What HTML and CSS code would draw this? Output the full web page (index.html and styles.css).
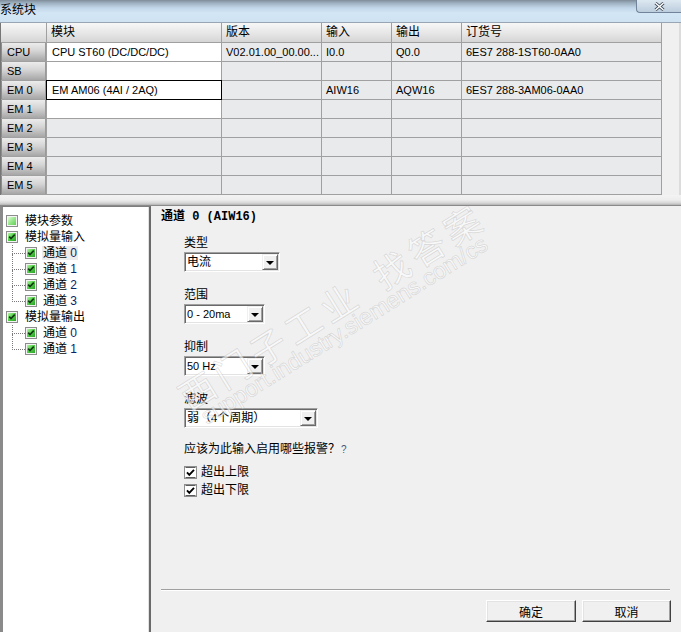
FILE: index.html
```html
<!DOCTYPE html>
<html lang="zh-CN">
<head>
<meta charset="utf-8">
<title>系统块</title>
<link rel="stylesheet" href="styles.css">
</head>
<body>
<div class="window">
  <div class="titlebar">
    <span class="title">系统块</span>
    <div class="close">
      <svg width="11" height="9" viewBox="0 0 11 9"><path d="M1.5 1 L9.5 8 M9.5 1 L1.5 8" stroke="#3b4856" stroke-width="3" fill="none"/><path d="M1.5 1 L9.5 8 M9.5 1 L1.5 8" stroke="#ffffff" stroke-width="1.5" fill="none"/></svg>
    </div>
  </div>

  <div class="top">
    <div class="grid">
      <div class="hdr"></div><div class="hdr">模块</div><div class="hdr">版本</div><div class="hdr">输入</div><div class="hdr">输出</div><div class="hdr">订货号</div>

      <div class="rh">CPU</div><div class="cell white">CPU ST60 (DC/DC/DC)</div><div class="cell">V02.01.00_00.00...</div><div class="cell">I0.0</div><div class="cell">Q0.0</div><div class="cell">6ES7 288-1ST60-0AA0</div>

      <div class="rh">SB</div><div class="cell white"></div><div class="cell"></div><div class="cell"></div><div class="cell"></div><div class="cell"></div>

      <div class="rh">EM 0</div><div class="cell white sel">EM AM06 (4AI / 2AQ)</div><div class="cell"></div><div class="cell">AIW16</div><div class="cell">AQW16</div><div class="cell">6ES7 288-3AM06-0AA0</div>

      <div class="rh">EM 1</div><div class="cell white"></div><div class="cell"></div><div class="cell"></div><div class="cell"></div><div class="cell"></div>

      <div class="rh">EM 2</div><div class="cell"></div><div class="cell"></div><div class="cell"></div><div class="cell"></div><div class="cell"></div>

      <div class="rh">EM 3</div><div class="cell"></div><div class="cell"></div><div class="cell"></div><div class="cell"></div><div class="cell"></div>

      <div class="rh">EM 4</div><div class="cell"></div><div class="cell"></div><div class="cell"></div><div class="cell"></div><div class="cell"></div>

      <div class="rh">EM 5</div><div class="cell"></div><div class="cell"></div><div class="cell"></div><div class="cell"></div><div class="cell"></div>
    </div>
    <div class="grid-side"></div>
  </div>

  <div class="splitter"></div>

  <div class="bottom">
    <div class="tree">
      <div class="tnode"><svg class="tcb"><use href="#tcb0"/></svg><span class="tl">模块参数</span></div>
      <div class="tnode"><svg class="tcb"><use href="#tcb"/></svg><span class="tl">模拟量输入</span></div>
      <div class="tnode child"><span class="conn"></span><svg class="tcb"><use href="#tcb"/></svg><span class="tl focus">通道 <span class="num">0</span></span></div>
      <div class="tnode child"><span class="conn"></span><svg class="tcb"><use href="#tcb"/></svg><span class="tl">通道 <span class="num">1</span></span></div>
      <div class="tnode child"><span class="conn"></span><svg class="tcb"><use href="#tcb"/></svg><span class="tl">通道 <span class="num">2</span></span></div>
      <div class="tnode child last"><span class="conn"></span><svg class="tcb"><use href="#tcb"/></svg><span class="tl">通道 <span class="num">3</span></span></div>
      <div class="tnode"><svg class="tcb"><use href="#tcb"/></svg><span class="tl">模拟量输出</span></div>
      <div class="tnode child"><span class="conn"></span><svg class="tcb"><use href="#tcb"/></svg><span class="tl">通道 <span class="num">0</span></span></div>
      <div class="tnode child last"><span class="conn"></span><svg class="tcb"><use href="#tcb"/></svg><span class="tl">通道 <span class="num">1</span></span></div>
    </div>

    <div class="props">
      <div class="ptitle">通道 0 (AIW16)</div>
      <div class="form">
        <div class="field first">
          <div class="flabel">类型</div>
          <div class="select w96"><span class="sval">电流</span><span class="sbtn"><span class="tri"></span></span></div>
        </div>
        <div class="field">
          <div class="flabel">范围</div>
          <div class="select w81"><span class="sval lat">0 - 20ma</span><span class="sbtn"><span class="tri"></span></span></div>
        </div>
        <div class="field">
          <div class="flabel">抑制</div>
          <div class="select w81"><span class="sval lat">50 Hz</span><span class="sbtn"><span class="tri"></span></span></div>
        </div>
        <div class="field">
          <div class="flabel">滤波</div>
          <div class="select w134"><span class="sval">弱（<span class="lat">4</span>个周期）</span><span class="sbtn"><span class="tri"></span></span></div>
        </div>
        <div class="q">应该为此输入启用哪些报警？<span class="qm">?</span></div>
        <div class="chk first">
          <svg class="cb" viewBox="0 0 13 13"><rect x="0.5" y="0.5" width="12" height="12" fill="#fff" stroke="#8e8e8e"/><rect x="1.5" y="1.5" width="10" height="10" fill="none" stroke="#5c5c5c" stroke-dasharray="10 10"/><path d="M3 6.3 L5.3 8.8 L10 3.8" fill="none" stroke="#000" stroke-width="1.9"/></svg>
          <span class="ctext">超出上限</span>
        </div>
        <div class="chk">
          <svg class="cb" viewBox="0 0 13 13"><rect x="0.5" y="0.5" width="12" height="12" fill="#fff" stroke="#8e8e8e"/><rect x="1.5" y="1.5" width="10" height="10" fill="none" stroke="#5c5c5c" stroke-dasharray="10 10"/><path d="M3 6.3 L5.3 8.8 L10 3.8" fill="none" stroke="#000" stroke-width="1.9"/></svg>
          <span class="ctext">超出下限</span>
        </div>
      </div>
      <div class="spacer"></div>
      <div class="hr"></div>
      <div class="btns">
        <button class="btn ok" type="button">确定</button>
        <button class="btn" type="button">取消</button>
      </div>
    </div>
  </div>

  <div class="wm wm-cn"><span>西门子工业</span><span>找答案</span></div>
  <div class="wm wm-url">support.industry.siemens.com/cs</div>
</div>

<svg class="defs" width="0" height="0" aria-hidden="true">
  <defs>
    <linearGradient id="gGreen" x1="0" y1="0" x2="1" y2="1">
      <stop offset="0" stop-color="#b9f2a9"/>
      <stop offset="0.45" stop-color="#55d24a"/>
      <stop offset="1" stop-color="#2ba327"/>
    </linearGradient>
    <linearGradient id="gLight" x1="0" y1="0" x2="1" y2="1">
      <stop offset="0" stop-color="#e2fbd8"/>
      <stop offset="0.5" stop-color="#98e58c"/>
      <stop offset="1" stop-color="#5fcf55"/>
    </linearGradient>
    <symbol id="tcb" viewBox="0 0 12 12">
      <rect x="0.5" y="0.5" width="11" height="11" fill="#f4f4f4" stroke="#8c8c8c"/>
      <rect x="2" y="2" width="8" height="8" fill="url(#gGreen)"/>
      <path d="M3.2 5.7 L5 7.6 L8.8 3.7" fill="none" stroke="#153a15" stroke-width="1.7"/>
    </symbol>
    <symbol id="tcb0" viewBox="0 0 12 12">
      <rect x="0.5" y="0.5" width="11" height="11" fill="#f4f4f4" stroke="#8c8c8c"/>
      <rect x="2" y="2" width="8" height="8" fill="url(#gLight)"/>
    </symbol>
  </defs>
</svg>
</body>
</html>
```
FILE: styles.css
```css
* { box-sizing: border-box; }
html, body { margin: 0; padding: 0; }
body {
  width: 681px;
  height: 632px;
  overflow: hidden;
  background: #f0f0f0;
  font-family: "Liberation Sans", "Noto Sans CJK SC", sans-serif;
  font-size: 12px;
  color: #000;
}
.window {
  position: relative;
  width: 681px;
  height: 632px;
  display: flex;
  flex-direction: column;
  overflow: hidden;
}

/* title bar */
.titlebar {
  flex: none;
  height: 23px;
  display: flex;
  justify-content: space-between;
  align-items: flex-start;
  background: linear-gradient(180deg, #7e8c98 0px, #9db0c0 3px, #c2d7e9 8px, #d3e6f5 13px, #cee2f2 22px);
  border-bottom: 1px solid #98a6b3;
}
.title {
  font-family: "Noto Sans CJK SC", sans-serif;
  font-size: 12px;
  line-height: 16px;
  margin-top: 1px;
}
.close {
  width: 45px;
  height: 13px;
  display: flex;
  align-items: center;
  justify-content: center;
  border: 1px solid #71849a;
  border-top: 0;
  border-right: 0;
  border-radius: 0 0 0 4px;
  background: linear-gradient(#dde8f1, #bccddd);
}

/* module grid */
.top { flex: none; display: flex; height: 172px; }
.grid {
  width: 662px;
  flex: none;
  display: grid;
  grid-template-columns: 45px 174px 99px 69px 69px 199px;
  grid-template-rows: 19px repeat(8, 18px);
  gap: 1px;
  background: #a0a0a0;
  border-left: 1px solid #767676;
  padding: 0 1px 1px 0;
}
.hdr {
  background: linear-gradient(#f7f7f7, #e6e6e6 55%, #d5d5d5);
  font-size: 12px;
  line-height: 19px;
  padding-left: 4px;
  white-space: nowrap;
}
.rh {
  background: linear-gradient(#ececec, #d4d4d4 45%, #a6a6a6);
  box-shadow: inset 1px 0 #8c8c8c, inset -1px 0 #9a9a9a;
  font-size: 11px;
  line-height: 18px;
  padding-left: 6px;
  white-space: nowrap;
}
.cell {
  background: #e9eaec;
  font-size: 11px;
  line-height: 18px;
  padding-left: 4px;
  white-space: nowrap;
  overflow: hidden;
}
.cell.white { background: #ffffff; padding-left: 5px; }
.cell.sel { outline: 1px solid #000; }
.grid-side { flex: 1; background: #f0f0f0; box-shadow: inset -2px 0 #dcdcdc; }

.splitter {
  flex: none;
  height: 11px;
  background: linear-gradient(#f3f3f3 0px, #ededed 5px, #d6d6d6 8px, #b2b2b2 10px, #8a8a8a 10px, #8a8a8a 11px);
}

/* lower area */
.bottom { flex: 1; display: flex; min-height: 0; }

.tree {
  width: 151px;
  flex: none;
  background: #ffffff;
  border-top: 1px solid #7e7e7e;
  border-left: 3px solid #8a8a8a;
  border-right: 2px solid #6a6a6a;
  box-shadow: inset -1px 0 #e2e2e2;
  padding-top: 6px;
}
.tnode {
  height: 16px;
  display: flex;
  align-items: center;
  padding-left: 3px;
  white-space: nowrap;
}
.tcb { width: 12px; height: 12px; flex: none; }
.tl {
  margin-left: 6px;
  padding: 0 1px;
  font-size: 12px;
  line-height: 14px;
}
.tl.focus { background: #ececec; }
.num { font-family: "Liberation Sans", sans-serif; color: #0c2266; }
.tnode.child { padding-left: 9px; }
.tnode.child .tl { margin-left: 5px; }
.conn { width: 13px; height: 16px; flex: none; }
.conn::before {
  content: "";
  display: block;
  height: 8px;
  border-left: 1px dotted #7a7a7a;
  border-bottom: 1px dotted #7a7a7a;
}
.conn::after {
  content: "";
  display: block;
  height: 8px;
  border-left: 1px dotted #7a7a7a;
}
.tnode.last .conn::after { border-left: 0; }

.props {
  flex: 1;
  display: flex;
  flex-direction: column;
  padding: 3px 10px 10px 10px;
}
.ptitle {
  font-family: "Liberation Mono", "Noto Sans CJK SC", monospace;
  font-weight: bold;
  font-size: 12px;
  line-height: 16px;
  white-space: nowrap;
}
.form { margin-left: 23px; }
.field { margin-top: 16px; }
.field.first { margin-top: 11px; }
.flabel { line-height: 15px; margin-bottom: 1px; }
.select {
  height: 20px;
  display: flex;
  background: #ffffff;
  border: 1px solid;
  border-color: #a0a0a0 #ffffff #ffffff #a0a0a0;
  padding: 1px;
  box-shadow: inset 1px 1px #696969, inset -1px -1px #e3e3e3;
}
.w96 { width: 96px; }
.w81 { width: 81px; }
.w134 { width: 134px; }
.sval {
  flex: 1;
  padding-left: 1px;
  line-height: 16px;
  font-size: 12px;
  white-space: nowrap;
  overflow: hidden;
}
.lat { font-size: 11px; }
.sbtn {
  width: 16px;
  height: 16px;
  flex: none;
  display: flex;
  align-items: center;
  justify-content: center;
  background: #f0f0f0;
  border: 1px solid;
  border-color: #f0f0f0 #696969 #696969 #f0f0f0;
  box-shadow: inset 1px 1px #ffffff, inset -1px -1px #a0a0a0;
}
.tri {
  width: 0;
  height: 0;
  border-left: 4px solid transparent;
  border-right: 4px solid transparent;
  border-top: 4px solid #000;
  margin-top: 1px;
}
.q { margin-top: 13px; line-height: 16px; white-space: nowrap; }
.qm { font-size: 10px; color: #4a5672; margin-left: 1px; }
.chk { height: 18px; display: flex; align-items: center; }
.chk.first { margin-top: 5px; }
.cb { width: 13px; height: 13px; flex: none; }
.ctext { margin-left: 4px; line-height: 16px; }

.spacer { flex: 1; }
.hr {
  height: 2px;
  border-top: 1px solid #a0a0a0;
  border-bottom: 1px solid #ffffff;
  margin-right: 1px;
  margin-bottom: 9px;
}
.btns { display: flex; justify-content: flex-end; gap: 6px; }
.btn {
  width: 89px;
  height: 22px;
  margin: 0;
  padding: 0;
  background: #f0f0f0;
  border: 1px solid;
  border-color: #ffffff #404040 #404040 #ffffff;
  box-shadow: inset -1px -1px #a0a0a0, inset 1px 1px #e3e3e3;
  font-family: "Liberation Sans", "Noto Sans CJK SC", sans-serif;
  font-size: 12px;
  color: #000;
  border-radius: 0;
}
.btn.ok { width: 90px; }

/* watermark overlay */
.wm {
  position: absolute;
  white-space: nowrap;
  color: rgba(255, 255, 255, 0.6);
  -webkit-text-stroke: 0.8px rgba(160, 160, 160, 0.32);
  pointer-events: none;
  transform: translate(-50%, -50%) rotate(-32deg);
}
.wm-cn {
  left: 331px;
  top: 305px;
  display: flex;
  gap: 21px;
  font-family: "Noto Sans CJK SC", sans-serif;
  font-size: 36px;
  letter-spacing: 5.6px;
  line-height: 40px;
}
.wm-url {
  left: 344px;
  top: 330px;
  font-family: "Liberation Sans", sans-serif;
  font-size: 23px;
  line-height: 26px;
}

.defs { display: block; width: 0; height: 0; }
```
